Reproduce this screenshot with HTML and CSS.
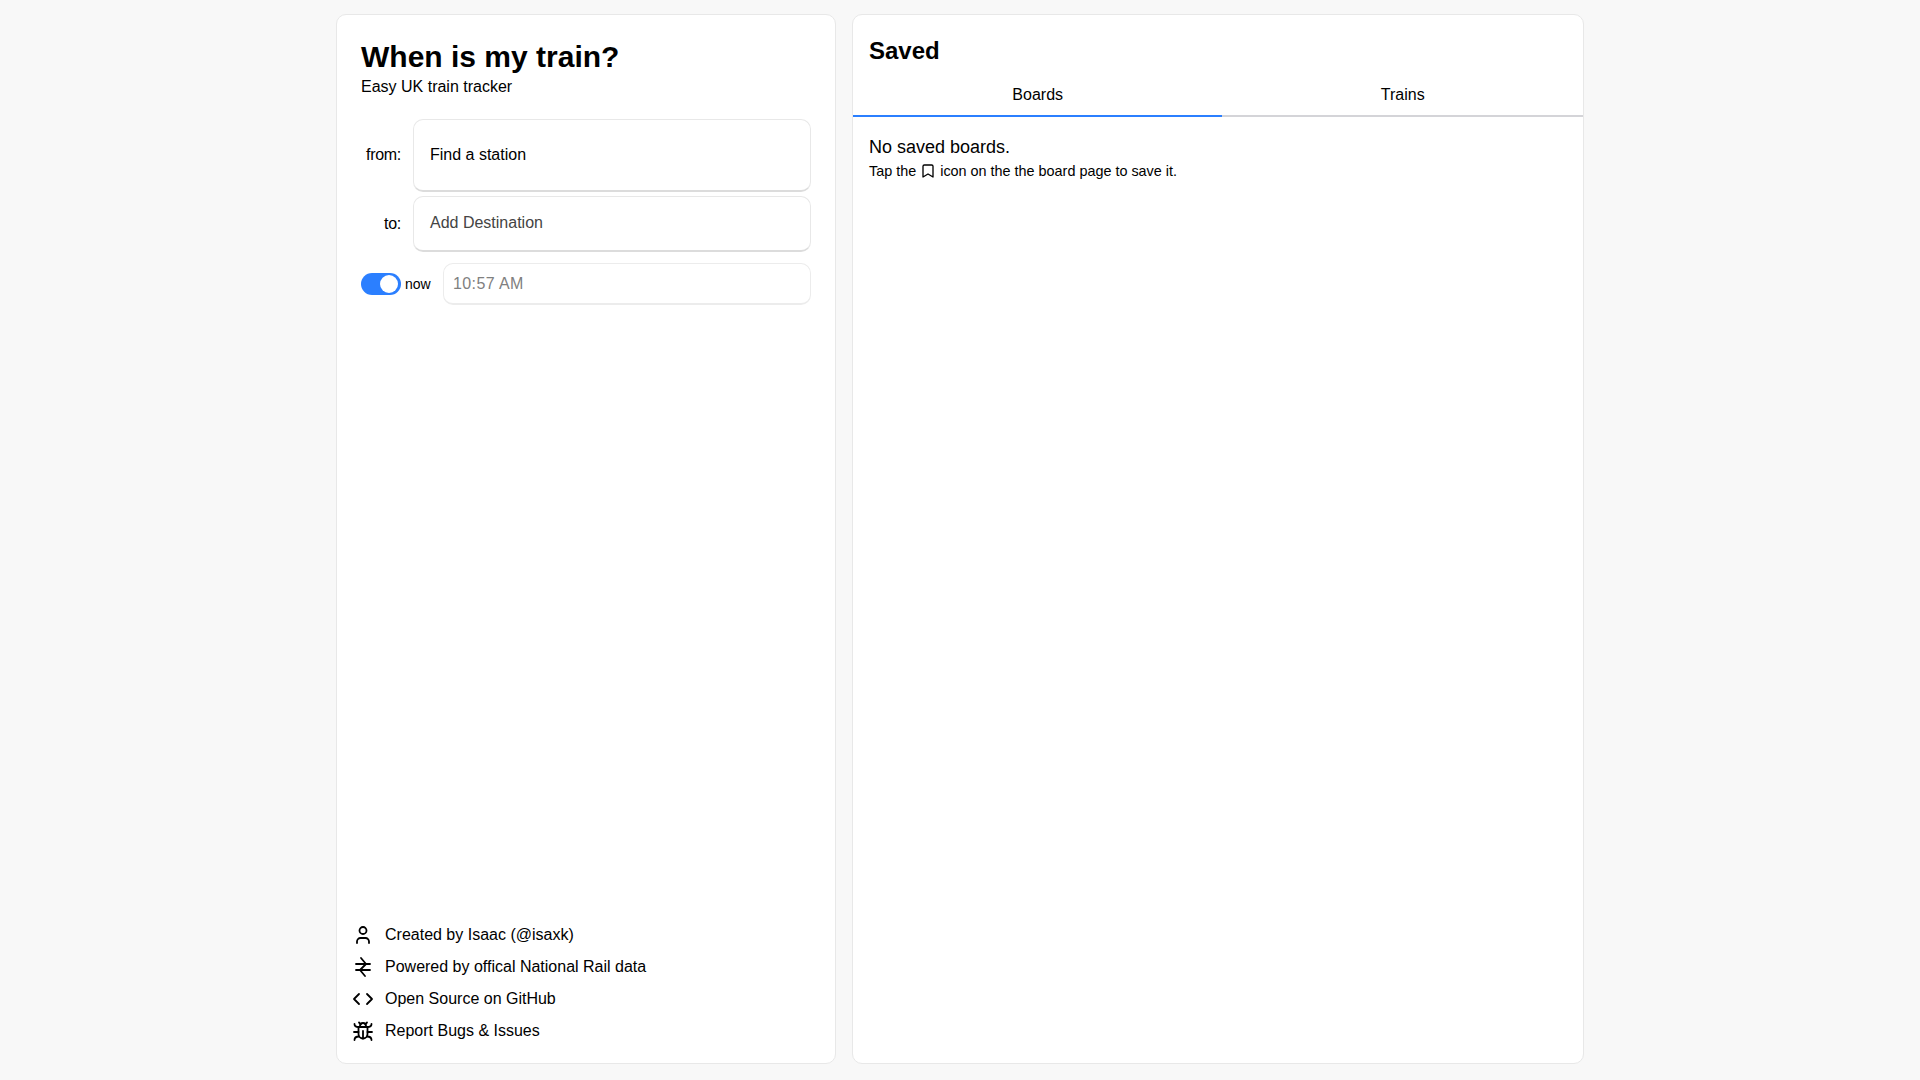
FILE: index.html
```html
<!DOCTYPE html>
<html lang="en">
<head>
<meta charset="utf-8">
<title>When is my train?</title>
<link rel="stylesheet" href="styles.css">
</head>
<body>
<main class="app">
  <section class="card search">
    <header class="brand">
      <h1>When is my train?</h1>
      <p>Easy UK train tracker</p>
    </header>
    <div class="fields">
      <div class="field">
        <span class="field-label">from:</span>
        <div class="box box-from">Find a station</div>
      </div>
      <div class="field">
        <span class="field-label">to:</span>
        <div class="box box-to">Add Destination</div>
      </div>
    </div>
    <div class="time-row">
      <span class="toggle"><span class="knob"></span></span>
      <span class="now">now</span>
      <div class="time">10:57 AM</div>
    </div>
    <ul class="links">
      <li>
        <svg class="icon" viewBox="0 0 24 24"><circle cx="12" cy="7.500" r="3.500"/><path d="M6 20v-1.500a3.500 3.500 0 0 1 3.500-3.500h5a3.500 3.500 0 0 1 3.500 3.500V20"/></svg>
        <span>Created by Isaac (@isaxk)</span>
      </li>
      <li>
        <svg class="icon" viewBox="0 0 24 24"><path d="M5 9h14M5 15h14M10 3l5 6-6 6 5 6"/></svg>
        <span>Powered by offical National Rail data</span>
      </li>
      <li>
        <svg class="icon" viewBox="0 0 24 24"><path d="M8 7l-5 5 5 5M16 7l5 5-5 5"/></svg>
        <span>Open Source on GitHub</span>
      </li>
      <li>
        <svg class="icon" viewBox="0 0 24 24"><path d="M9 8V7a3 3 0 0 1 6 0v1"/><path d="M8 3.500l1.800 1.800M16 3.500l-1.800 1.800"/><path d="M7.500 8h9v7a4.500 4.500 0 0 1-9 0z"/><path d="M12 12v7.500M3.500 5c0 1.800 1.500 3 4 3M20.500 5c0 1.800-1.500 3-4 3M3 13h4.500M16.500 13H21M3.500 21c0-2 1.200-3.500 4.500-3.500M20.500 21c0-2-1.200-3.500-4.500-3.500"/></svg>
        <span>Report Bugs &amp; Issues</span>
      </li>
    </ul>
  </section>
  <section class="card saved">
    <h2>Saved</h2>
    <div class="tabs">
      <div class="tab tab-active">Boards</div>
      <div class="tab">Trains</div>
    </div>
    <div class="empty">
      <p class="empty-title">No saved boards.</p>
      <p class="empty-hint">Tap the
        <svg class="icon-small" viewBox="0 0 24 24"><path d="M4.500 5a2 2 0 0 1 2-2h11a2 2 0 0 1 2 2v16L12 16.500 4.500 21z"/></svg>
        icon on the the board page to save it.</p>
    </div>
  </section>
</main>
</body>
</html>
```
FILE: styles.css
```css
* { box-sizing: border-box; }
html, body { height: 100%; }
body {
  margin: 0;
  background: #f8f8f8;
  color: #000;
  font-family: "Liberation Sans", Arial, sans-serif;
  font-size: 16px;
}
.app {
  width: 1248px;
  height: 1080px;
  margin: 0 auto;
  padding: 14px 0 16px;
  display: flex;
  gap: 16px;
}
.card {
  background: #fff;
  border: 1px solid #e8e8e8;
  border-radius: 10px;
  display: flex;
  flex-direction: column;
}
.search { width: 500px; padding: 24px 24px 18px 24px; }
.saved { flex: 1; }
.brand h1 { margin: 0; font-size: 30px; line-height: 36px; font-weight: 700; }
.brand p { margin: 2px 0 0; line-height: 20px; }
.fields { margin-top: 22px; display: flex; flex-direction: column; gap: 4px; }
.field { display: flex; align-items: center; }
.field-label { width: 40px; text-align: right; margin-right: 12px; margin-bottom: 1px; flex: none; letter-spacing: -0.3px; }
.box {
  flex: 1;
  border: 1px solid #e8e8e8;
  border-bottom: 2px solid #dcdcdc;
  border-radius: 10px;
  padding: 0 16px;
  display: flex;
  align-items: center;
  background: #fff;
}
.box-from { height: 73px; }
.box-to { height: 56px; padding-bottom: 1px; color: #444; }
.time-row { margin-top: 11px; display: flex; align-items: center; }
.toggle {
  width: 40px;
  height: 22px;
  border-radius: 11px;
  background: #2b7fff;
  display: flex;
  align-items: center;
  justify-content: flex-end;
  padding-right: 3px;
  flex: none;
}
.knob { width: 18px; height: 18px; border-radius: 50%; background: #fff; }
.now { margin-left: 4px; font-size: 14px; width: 38px; flex: none; }
.time {
  flex: 1;
  height: 42px;
  border: 1px solid #ececec;
  border-bottom-width: 2px;
  border-radius: 10px;
  padding: 0 9px;
  display: flex;
  align-items: center;
  color: #808080;
  letter-spacing: 0.4px;
}
.links { list-style: none; margin: auto 0 0 -10px; padding: 0; display: flex; flex-direction: column; gap: 4px; }
.links li { display: flex; align-items: center; gap: 10px; height: 28px; }
.icon { width: 24px; height: 24px; fill: none; stroke: #000; stroke-width: 1.8; stroke-linecap: round; stroke-linejoin: round; flex: none; }
.saved h2 { margin: 0; padding: 20px 16px 0; font-size: 24px; line-height: 32px; font-weight: 700; }
.tabs { display: flex; margin-top: 6px; }
.tab { flex: 1 1 auto; height: 44px; padding-top: 10px; text-align: center; line-height: 24px; border-bottom: 2px solid #d4d4d8; }
.tab-active { border-bottom-color: #2b7fff; padding-inline: 1px; }
.empty { padding: 18px 16px 0; }
.empty-title { margin: 0; font-size: 18px; line-height: 24px; }
.empty-hint { margin: 2px 0 0; font-size: 14.4px; line-height: 20px; }
.icon-small { width: 16px; height: 16px; fill: none; stroke: #000; stroke-width: 2; stroke-linecap: round; stroke-linejoin: round; vertical-align: -3px; }
```
